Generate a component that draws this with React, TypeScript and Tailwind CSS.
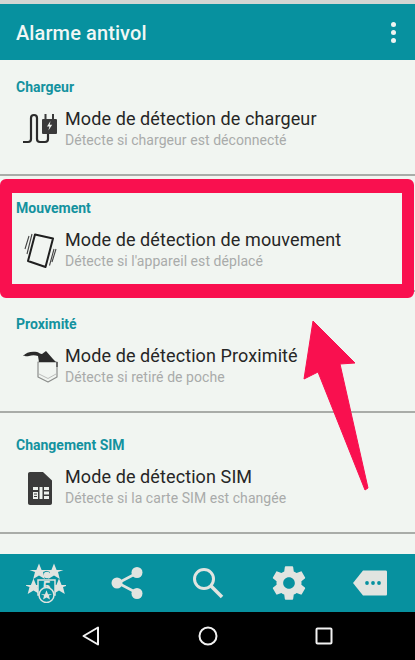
const font = { fontFamily: "Roboto, sans-serif" };

function ChargerIcon() {
  return (
    <svg width="36" height="36" viewBox="0 0 36 36" fill="none">
      <path d="M1 31h5c2 0 3-1 3-3V7c0-2 1-3 3-3s3 1 3 3v21c0 2 1 3 3 3h5c2 0 3-1 3-3v-5" stroke="#2b2b2b" strokeWidth="2.2" />
      <rect x="20" y="8" width="15" height="15" rx="1" fill="#3a3a3a" />
      <rect x="22.500" y="3" width="2" height="5" fill="#3a3a3a" />
      <rect x="30" y="3" width="2" height="5" fill="#3a3a3a" />
      <path d="M28.500 10l-3.500 5.500h2.400l-1 4 3.800-5.800h-2.500z" fill="#f1f5f1" />
    </svg>
  );
}

function MotionIcon() {
  return (
    <svg width="36" height="36" viewBox="0 0 36 36" fill="none">
      <path d="M13 2.500L31 6.500 23.500 35 6 29z" stroke="#1f1f1f" strokeWidth="2" strokeLinejoin="round" />
      <path d="M10 2L5 22M7 4L3 17" stroke="#444" strokeWidth="1.100" />
      <path d="M32 17l-4.500 16.500M34 17l-4 13" stroke="#444" strokeWidth="1.100" />
    </svg>
  );
}

function PocketIcon() {
  return (
    <svg width="36" height="36" viewBox="0 0 36 36" fill="none">
      <path d="M16 14h19v15l-9 5-10-5z" fill="#f1f5f1" stroke="#8b8d8b" strokeWidth="1.200" strokeLinejoin="round" />
      <path d="M17 26l9 4.500 8-4.500" stroke="#bcbebc" strokeWidth="1" />
      <path d="M1 8C4 4 10 3 15 4c2 .5 3 2 5 2l4-3 7 8 3 3H17l-1-6c-3-1-6-1-9 0-2 .5-4 .5-6-1z" fill="#2a2a2a" />
      <path d="M35 14v5" stroke="#4a4a4a" strokeWidth="1.400" />
    </svg>
  );
}

function SimIcon() {
  return (
    <svg width="36" height="36" viewBox="0 0 36 36" fill="none">
      <path d="M8 3h13l9 8.500V34c0 1.200-.8 2-2 2H8c-1.200 0-2-.8-2-2V5c0-1.200.8-2 2-2z" fill="#3b3b3b" />
      <path d="M11 18h5v3h-5zM11 23h5v7h-5zM17.500 18h3v12h-3zM22 18h5v3h-5zM22 22.500h5v3h-5zM22 27h5v3h-5z" fill="#eef2ee" />
      <path d="M12 25h3M12 27.500h3" stroke="#3b3b3b" strokeWidth="1" />
    </svg>
  );
}

function RateIcon() {
  const star = "M0-9.500L2.600-3 9.500-2.900 4-1 5.800 6 0 2.500-5.800 6-4-1-9.500-2.900-2.600-3z";
  return (
    <svg width="40" height="40" viewBox="0 0 40 40" fill="#e1e4e0">
      <path d={star} transform="translate(13 10)" />
      <path d={star} transform="translate(28 10)" />
      <path d={star} transform="translate(7.500 25)" />
      <path d={star} transform="translate(33 25)" />
      <circle cx="21" cy="12" r="3.200" />
      <path d="M12 17h17v15H12z" fill="#07919f" stroke="#e1e4e0" strokeWidth="1.500" />
      <text x="20.500" y="29" textAnchor="middle" fontSize="14" fontWeight="700" fill="#e1e4e0" style={font}>5</text>
      <circle cx="20.500" cy="32" r="7.500" fill="#07919f" stroke="#e1e4e0" strokeWidth="1.500" />
      <path d={star} transform="translate(20.500 33) scale(.6)" />
    </svg>
  );
}

function ShareIcon() {
  return (
    <svg width="36" height="36" viewBox="0 0 36 36" fill="#e1e4e0">
      <path d="M28 8L9 18l19 10" fill="none" stroke="#e1e4e0" strokeWidth="2.600" />
      <circle cx="28" cy="7.500" r="5.500" />
      <circle cx="8" cy="18" r="5.500" />
      <circle cx="28" cy="28.500" r="5.500" />
    </svg>
  );
}

function SearchIcon() {
  return (
    <svg width="34" height="34" viewBox="0 0 34 34" fill="none" stroke="#e1e4e0">
      <circle cx="13" cy="13" r="9.500" strokeWidth="3" />
      <path d="M20 20l11 11" strokeWidth="3.600" />
    </svg>
  );
}

function GearIcon() {
  return (
    <svg width="40" height="40" viewBox="0 0 24 24" fill="#e1e4e0">
      <path d="M19.43 12.98c.04-.32.07-.64.07-.98s-.03-.66-.07-.98l2.110-1.650c.19-.15.24-.42.12-.64l-2-3.460c-.12-.22-.39-.3-.61-.22l-2.490 1c-.52-.4-1.080-.73-1.690-.98l-.38-2.650C14.460 2.180 14.250 2 14 2h-4c-.25 0-.46.18-.49.42l-.38 2.650c-.61.25-1.170.59-1.690.98l-2.490-1c-.23-.09-.49 0-.61.22l-2 3.460c-.13.22-.07.49.12.64l2.110 1.650c-.04.32-.07.65-.07.98s.03.66.07.98l-2.110 1.650c-.19.15-.24.42-.12.64l2 3.460c.12.22.39.3.61.22l2.490-1c.52.4 1.080.73 1.690.98l.38 2.650c.03.24.24.42.49.42h4c.25 0 .46-.18.49-.42l.38-2.650c.61-.25 1.170-.59 1.690-.98l2.490 1c.23.09.49 0 .61-.22l2-3.460c.12-.22.07-.49-.12-.64l-2.110-1.650zM12 15.500c-1.930 0-3.500-1.570-3.500-3.500s1.570-3.500 3.500-3.500 3.500 1.570 3.500 3.500-1.570 3.500-3.500 3.500z" />
    </svg>
  );
}

function TagIcon() {
  return (
    <svg width="36" height="28" viewBox="0 0 36 28" fill="#e1e4e0">
      <path d="M11 1.500h22.500c1 0 1.500.5 1.500 1.500v22c0 1-.5 1.500-1.500 1.500H11L1 14z" />
      <circle cx="15" cy="14" r="1.900" fill="#07919f" />
      <circle cx="21" cy="14" r="1.900" fill="#07919f" />
      <circle cx="27" cy="14" r="1.900" fill="#07919f" />
    </svg>
  );
}

type SectionProps = {
  label: string;
  title: string;
  sub: string;
  icon: React.ReactNode;
  className: string;
};

function Section({ label, title, sub, icon, className }: SectionProps) {
  return (
    <section className={`border-b-2 border-[#a9aca8] ${className}`}>
      <h2 className="pl-4 text-[14px] leading-4 font-bold text-[#14929f]">{label}</h2>
      <div className="mt-3 flex items-center">
        <div className="ml-[22px] flex w-[43px] shrink-0">{icon}</div>
        <div>
          <p className="text-[18px] leading-6 tracking-[.1px] text-[#262626]">{title}</p>
          <p className="text-[14px] leading-[19px] tracking-[.06px] text-[#a9abaa]">{sub}</p>
        </div>
      </div>
    </section>
  );
}

export default function App() {
  return (
    <div className="relative flex h-[660px] w-[415px] flex-col overflow-hidden bg-[#f1f5f1]" style={font}>
      <div className="h-1 bg-[#d3d6d3]" />
      <header className="flex h-14 items-center justify-between bg-[#07919f] pr-[19px] pl-4">
        <h1 className="pt-[2px] text-[20px] font-medium tracking-[.1px] text-[#f1f7f5]">Alarme antivol</h1>
        <div className="flex flex-col gap-[3px]">
          <span className="size-[5px] rounded-full bg-[#eef4f2]" />
          <span className="size-[5px] rounded-full bg-[#eef4f2]" />
          <span className="size-[5px] rounded-full bg-[#eef4f2]" />
        </div>
      </header>

      <main className="flex-1">
        <Section className="h-[116px] pt-[19px]" label="Chargeur" title="Mode de détection de chargeur" sub="Détecte si chargeur est déconnecté" icon={<ChargerIcon />} />
        <Section className="h-[116px] pt-6" label="Mouvement" title="Mode de détection de mouvement" sub="Détecte si l'appareil est déplacé" icon={<MotionIcon />} />
        <Section className="h-[121px] pt-6" label="Proximité" title="Mode de détection Proximité" sub="Détecte si retiré de poche" icon={<PocketIcon />} />
        <Section className="h-[121px] pt-6" label="Changement SIM" title="Mode de détection SIM" sub="Détecte si la carte SIM est changée" icon={<SimIcon />} />
      </main>

      <nav className="flex h-[58px] items-center bg-[#07919f] pl-[5px]">
        <div className="flex w-[81px] justify-center"><RateIcon /></div>
        <div className="flex w-[81px] justify-center"><ShareIcon /></div>
        <div className="flex w-[81px] justify-center"><SearchIcon /></div>
        <div className="flex w-[81px] justify-center"><GearIcon /></div>
        <div className="flex w-[81px] justify-center"><TagIcon /></div>
      </nav>

      <div className="flex h-12 items-center bg-black pl-[33px]">
        <div className="flex w-[116px] justify-center">
          <svg width="20" height="22" viewBox="0 0 20 22" fill="none"><path d="M17 2.500v17L2.500 11z" stroke="#f2f2f2" strokeWidth="2" strokeLinejoin="round" /></svg>
        </div>
        <div className="flex w-[117px] justify-center">
          <svg width="22" height="22" viewBox="0 0 22 22" fill="none"><circle cx="11" cy="11" r="8.500" stroke="#f2f2f2" strokeWidth="2" /></svg>
        </div>
        <div className="flex w-[116px] justify-center">
          <svg width="20" height="20" viewBox="0 0 20 20" fill="none"><rect x="2.500" y="2.500" width="15" height="15" rx="1" stroke="#f2f2f2" strokeWidth="2" /></svg>
        </div>
      </div>

      {/* annotation drawn over the screenshot */}
      <div className="pointer-events-none absolute top-[179px] left-0 h-[119px] w-[414px] rounded-[6px] border-x-[12px] border-y-[14px] border-[#f9104f]" />
      <svg className="pointer-events-none absolute top-0 left-0" width="415" height="660" viewBox="0 0 415 660">
        <path d="M313 321L355 363 340 364 368 488 365 490 318 372 304 379z" fill="#f9104f" strokeLinejoin="round" stroke="#f9104f" strokeWidth="1" />
      </svg>
    </div>
  );
}
